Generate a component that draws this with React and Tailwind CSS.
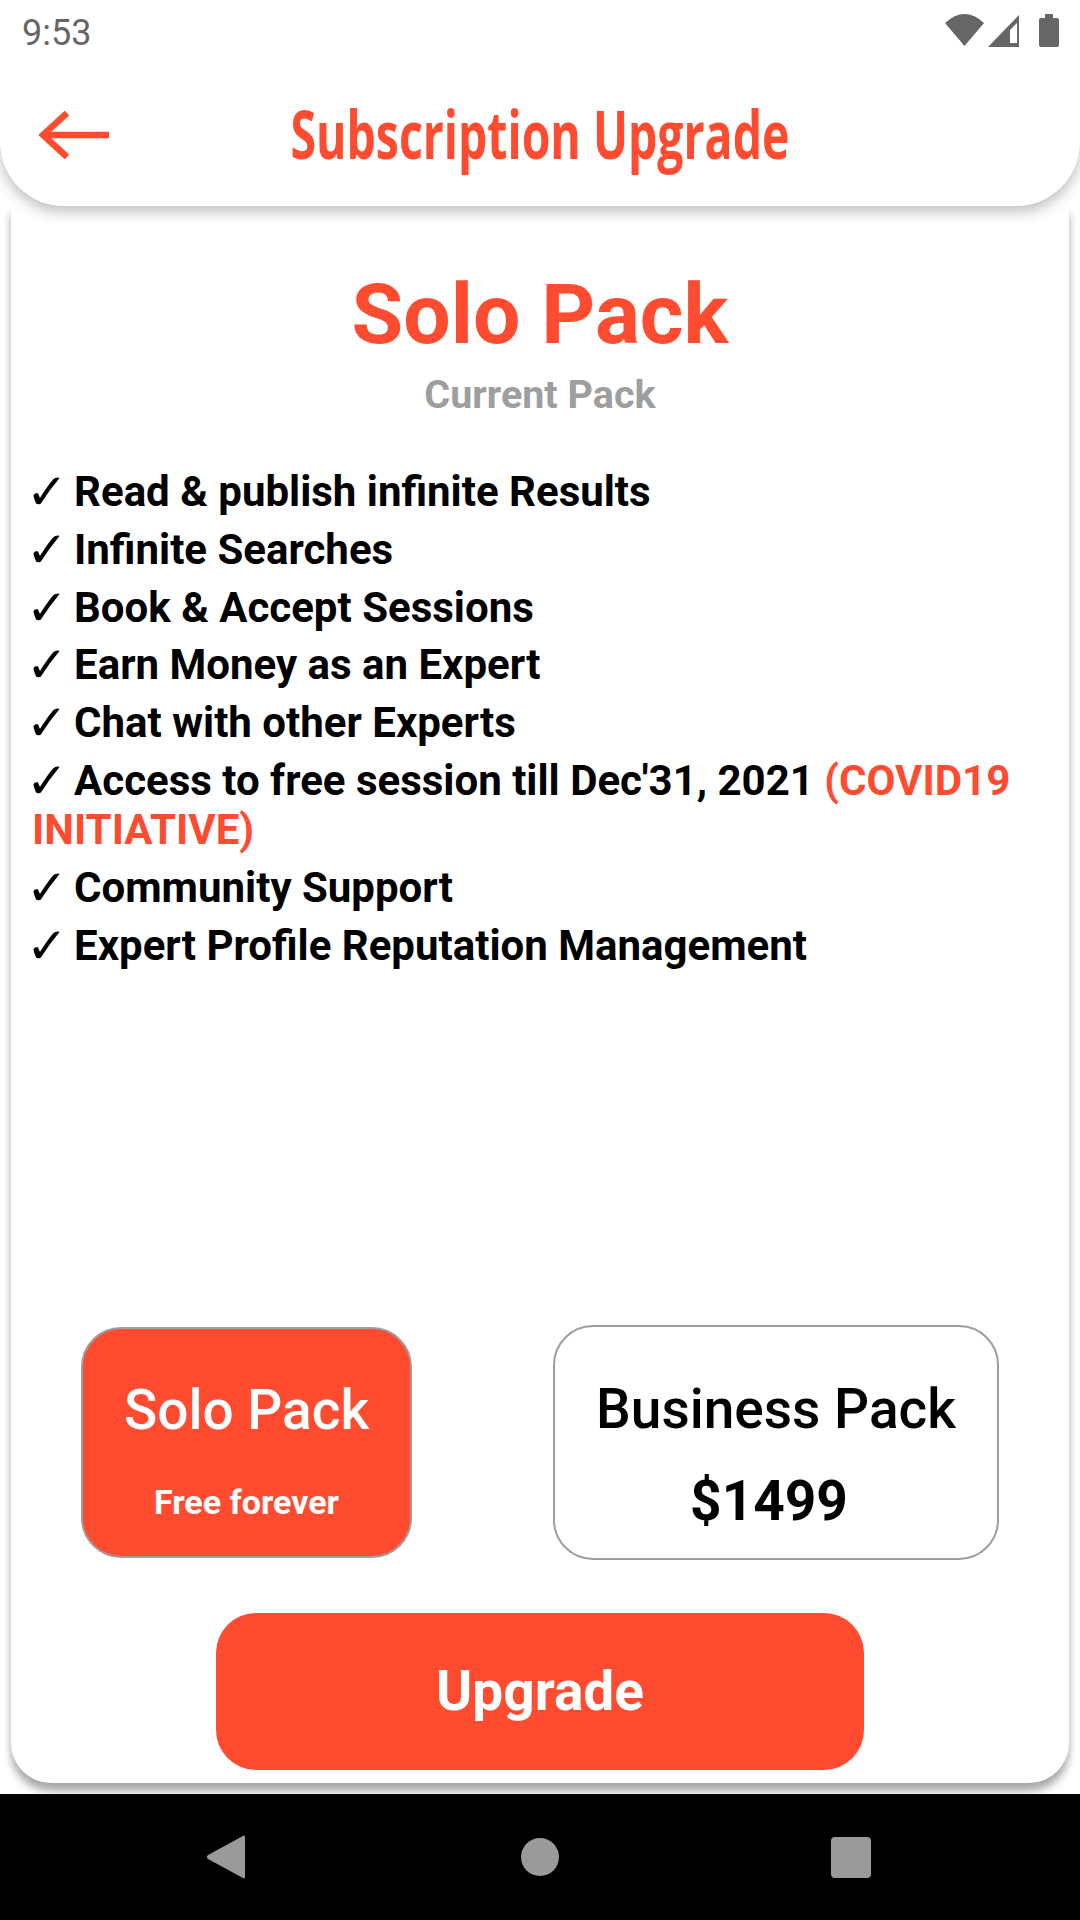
const items = [
  "Read & publish infinite Results",
  "Infinite Searches",
  "Book & Accept Sessions",
  "Earn Money as an Expert",
  "Chat with other Experts",
];
const items2 = ["Community Support", "Expert Profile Reputation Management"];

function Line({ children }) {
  return (
    <p className="m-0">
      <span className="-ml-[6px] inline-block w-[37.6px] translate-y-[3px] font-['DejaVu_Sans',sans-serif] text-[50px] font-normal leading-[0]">✓</span> {children}
    </p>
  );
}

export default function App() {
  return (
    <div className="relative flex h-[1920px] w-[1080px] flex-col overflow-hidden bg-white font-['Roboto',sans-serif] text-black">
      <header className="relative z-10 flex h-[206px] shrink-0 flex-col rounded-b-[64px] bg-white shadow-[0_6px_14px_rgba(0,0,0,0.25)]">
        <div className="flex h-[66px] items-center justify-between pl-[22px] pr-[21px] text-[36px] text-[#666666]">
          <span>9:53</span>
          <div className="mb-[6px] flex items-center">
            <svg width="39" height="32" viewBox="0 0 39 32"><path d="M19.500 32 L0 9 Q19.500 -9 39 9 Z" fill="#666666" /></svg>
            <svg className="ml-[4px] mt-[2px]" width="31" height="32" viewBox="0 0 31 32"><path d="M31 0 V32 H0 Z" fill="#666666" /><path d="M22 28 V15 L29 8 V28 Z" fill="#ffffff" /></svg>
            <svg className="ml-[20px]" width="20" height="33" viewBox="0 0 20 33"><path d="M6 0 H14 V4 H18 A2 2 0 0 1 20 6 V31 A2 2 0 0 1 18 33 H2 A2 2 0 0 1 0 31 V6 A2 2 0 0 1 2 4 H6 Z" fill="#666666" /></svg>
          </div>
        </div>
        <div className="relative flex flex-1 items-center justify-center">
          <svg className="absolute left-[39px] top-[45px]" width="72" height="48" viewBox="0 0 72 48" fill="none" stroke="#ff4b30" strokeWidth="6.5">
            <path d="M70 24 H4" />
            <path d="M28 2 L4 24 L28 46" />
          </svg>
          <h1 className="m-0 scale-x-[0.703] whitespace-nowrap pb-[5px] font-['Open_Sans',sans-serif] text-[66px] font-bold text-[#ff4b30]">Subscription Upgrade</h1>
        </div>
      </header>

      <main className="mx-[11px] flex h-[1577px] flex-col rounded-b-[40px] bg-white px-[21px] pb-[13px] shadow-[0_8px_8px_rgba(0,0,0,0.35)]">
        <div className="mt-[60px] text-center text-[84px] font-bold leading-[98px] text-[#ff4b30]">Solo Pack</div>
        <div className="mt-[8px] text-center text-[39.500px] font-bold leading-[46px] text-[#9e9e9e]">Current Pack</div>
        <div className="mt-[49px] flex flex-col gap-[8.8px] text-[42px] font-bold leading-[49px]">
          {items.map((t) => <Line key={t}>{t}</Line>)}
          <Line>Access to free session till Dec'31, 2021 <span className="text-[#ff4b30]">(COVID19 INITIATIVE)</span></Line>
          {items2.map((t) => <Line key={t}>{t}</Line>)}
        </div>
        <div className="flex-1" />
        <div className="flex items-center pl-[49px]">
          <div className="flex h-[231px] w-[331px] flex-col items-center justify-center rounded-[40px] border-2 border-[#9e9e9e] bg-[#ff4b30] pt-[14px] text-white">
            <div className="text-[55px] font-medium leading-[66px]">Solo Pack</div>
            <div className="mt-[39px] text-[34px] font-bold leading-[40px]">Free forever</div>
          </div>
          <div className="ml-[141px] flex h-[235px] w-[446px] flex-col items-center justify-center rounded-[40px] border-2 border-[#9e9e9e] bg-white pt-[24px]">
            <div className="text-[55px] font-medium leading-[66px]">Business Pack</div>
            <div className="mt-[26px] pr-[14px] text-[55px] font-bold leading-[66px]">$1499</div>
          </div>
        </div>
        <button className="ml-[184px] mt-[53px] flex h-[157px] w-[648px] items-center justify-center rounded-[40px] bg-[#ff4b30] text-[55px] font-bold text-white">Upgrade</button>
      </main>

      <nav className="absolute bottom-0 left-0 flex h-[126px] w-[1080px] items-center bg-black">
        <svg className="absolute left-[205px] top-[40px]" width="42" height="46" viewBox="0 0 42 46"><path d="M38 2 C39 1 40 2 40 3 V43 C40 44 39 45 38 44 L3 25 C1.500 24 1.500 22 3 21 Z" fill="#9a9a9a" /></svg>
        <div className="absolute left-[521px] top-[44px] h-[38px] w-[38px] rounded-full bg-[#9a9a9a]" />
        <div className="absolute left-[831px] top-[43px] h-[41px] w-[40px] rounded-[4px] bg-[#9a9a9a]" />
      </nav>
    </div>
  );
}
